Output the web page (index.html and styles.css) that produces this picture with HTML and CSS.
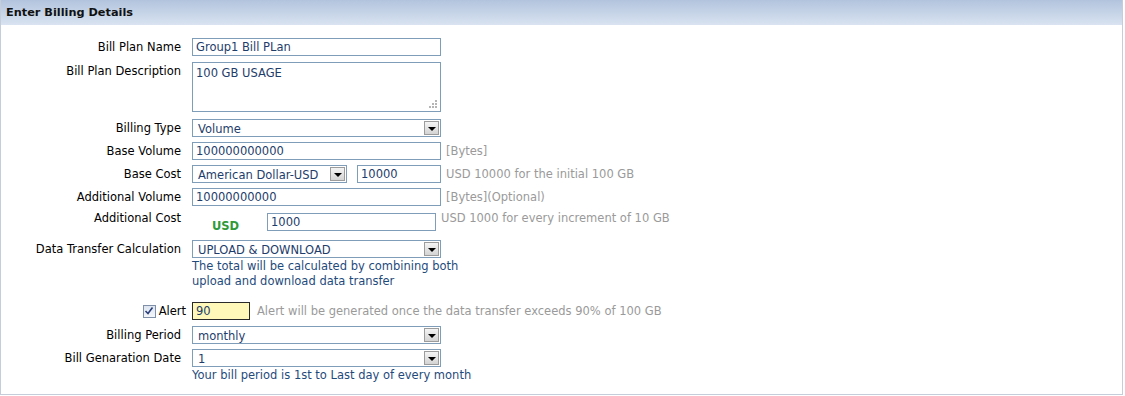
FILE: index.html
```html
<!DOCTYPE html>
<html lang="en">
<head>
    <meta charset="UTF-8">
    <title>Enter Billing Details</title>
    <link rel="stylesheet" href="styles.css">
</head>
<body>

    <div class="panel">
        <!-- Panel Header -->
        <div class="panel-head">Enter Billing Details</div>

        <div class="panel-body">
            <div class="row">
                <div class="label">Bill Plan Name</div>
                <input class="field w-full" type="text" value="Group1 Bill PLan">
            </div>

            <div class="row row-desc">
                <div class="label">Bill Plan Description</div>
                <div class="area-wrap">
                    <textarea class="field area">100 GB USAGE</textarea>
                    <svg class="grip" width="8" height="8" viewBox="0 0 8 8">
                        <rect x="6" y="0" width="2" height="2" fill="#b5b5b5"/>
                        <rect x="3" y="3" width="2" height="2" fill="#b5b5b5"/>
                        <rect x="6" y="3" width="2" height="2" fill="#b5b5b5"/>
                        <rect x="0" y="6" width="2" height="2" fill="#b5b5b5"/>
                        <rect x="3" y="6" width="2" height="2" fill="#b5b5b5"/>
                        <rect x="6" y="6" width="2" height="2" fill="#b5b5b5"/>
                    </svg>
                </div>
            </div>

            <div class="row">
                <div class="label">Billing Type</div>
                <div class="select w-full"><span>Volume</span><i class="arrow"></i></div>
            </div>

            <div class="row">
                <div class="label">Base Volume</div>
                <input class="field w-full" type="text" value="100000000000">
                <span class="hint">[Bytes]</span>
            </div>

            <div class="row">
                <div class="label">Base Cost</div>
                <div class="select w-currency"><span>American Dollar-USD</span><i class="arrow"></i></div>
                <input class="field w-cost" type="text" value="10000">
                <span class="hint">USD 10000 for the initial 100 GB</span>
            </div>

            <div class="row">
                <div class="label">Additional Volume</div>
                <input class="field w-full" type="text" value="10000000000">
                <span class="hint">[Bytes](Optional)</span>
            </div>

            <div class="row row-addcost">
                <div class="label">Additional Cost</div>
                <span class="currency">USD</span>
                <input class="field w-addcost" type="text" value="1000">
                <span class="hint">USD 1000 for every increment of 10 GB</span>
            </div>

            <div class="row row-transfer">
                <div class="label">Data Transfer Calculation</div>
                <div>
                    <div class="select w-full"><span>UPLOAD &amp; DOWNLOAD</span><i class="arrow"></i></div>
                    <div class="note">The total will be calculated by combining both<br>upload and download data transfer</div>
                </div>
            </div>

            <div class="row row-alert">
                <div class="label">
                    <span class="check">
                        <svg width="10" height="10" viewBox="0 0 10 10"><path d="M1.5 5 L4 7.5 L8.5 1.5" fill="none" stroke="#2a3f7a" stroke-width="1.6"/></svg>
                    </span>Alert
                </div>
                <input class="field alert-input" type="text" value="90">
                <span class="hint">Alert will be generated once the data transfer exceeds 90% of 100 GB</span>
            </div>

            <div class="row">
                <div class="label">Billing Period</div>
                <div class="select w-full"><span>monthly</span><i class="arrow"></i></div>
            </div>

            <div class="row">
                <div class="label">Bill Genaration Date</div>
                <div>
                    <div class="select w-full"><span>1</span><i class="arrow"></i></div>
                    <div class="note">Your bill period is 1st to Last day of every month</div>
                </div>
            </div>
        </div>
    </div>

</body>
</html>
```

FILE: styles.css
```css
body {
    margin: 0;
    padding: 0;
    font-family: "DejaVu Sans", Verdana, sans-serif;
    font-size: 11.5px;
    color: #000;
    background: #fff;
}
.panel {
    width: 1121px;
    height: 394px;
    border: 1px solid #c5cddb;
    border-top: none;
}
.panel-head {
    height: 25px;
    line-height: 25px;
    padding-left: 5px;
    font-size: 11.3px;
    font-weight: bold;
    color: #111;
    background: linear-gradient(#b2c4dd, #d9e3f1);
}
.panel-body {
    padding-top: 13px;
}
.row {
    display: flex;
    align-items: flex-start;
    margin-bottom: 5px;
}
.row-desc {
    margin-top: 6px;
    margin-bottom: 7px;
}
.label {
    width: 180px;
    padding-right: 11px;
    text-align: right;
    line-height: 18px;
    flex-shrink: 0;
}
.field {
    box-sizing: border-box;
    height: 18px;
    margin: 0;
    padding: 0 3px;
    border: 1px solid #7f9db9;
    font-family: inherit;
    font-size: 11.5px;
    color: #1e3d6b;
    background: #fff;
    outline: none;
}
.w-full { width: 249px; }
.w-cost { width: 84px; margin-left: 10px; }
.w-addcost { width: 169px; margin-top: 2px; }
.w-currency { width: 155px; }
.area-wrap {
    position: relative;
    width: 249px;
    height: 50px;
}
.area {
    width: 249px;
    height: 50px;
    padding: 3px;
    resize: none;
    display: block;
}
.grip {
    position: absolute;
    right: 4px;
    bottom: 4px;
}
.select {
    box-sizing: border-box;
    height: 18px;
    display: flex;
    align-items: center;
    justify-content: space-between;
    border: 1px solid #7f9db9;
    padding: 0 1px 0 5px;
    color: #1e3d6b;
    background: #fff;
}
.select span {
    padding-top: 2px;
}
.arrow {
    box-sizing: border-box;
    width: 15px;
    height: 14px;
    border: 1px solid #9c9c9c;
    background: linear-gradient(#f4f4f4, #d4d4d4);
    position: relative;
}
.arrow::after {
    content: "";
    position: absolute;
    left: 3px;
    top: 5px;
    border-left: 4px solid transparent;
    border-right: 4px solid transparent;
    border-top: 4px solid #000;
}
.hint {
    margin-left: 5px;
    line-height: 18px;
    color: #9a9a9a;
}
.row-addcost .label {
    line-height: 14px;
}
.row-addcost .hint {
    line-height: 14px;
}
.currency {
    width: 55px;
    padding: 6px 0 0 20px;
    line-height: 18px;
    font-weight: bold;
    color: #2e9a3a;
}
.row-transfer {
    margin-top: 5px;
}
.note {
    margin-top: 1px;
    line-height: 15px;
    color: #1f4b7c;
}
.row-alert {
    margin-top: 13px;
    margin-bottom: 6px;
}
.row-alert .label {
    display: flex;
    justify-content: flex-end;
    align-items: center;
    padding-right: 6px;
    width: 185px;
}
.check {
    box-sizing: border-box;
    width: 13px;
    height: 13px;
    margin-right: 3px;
    border: 1px solid #7f8fa8;
    background: linear-gradient(#dfe6f1, #f3f6fa);
    display: flex;
    align-items: center;
    justify-content: center;
}
.alert-input {
    width: 58px;
    border-color: #2a2a2a;
    background: #fff8b8;
    color: #1e3d6b;
}
.row-alert .hint {
    margin-left: 7px;
}
```
